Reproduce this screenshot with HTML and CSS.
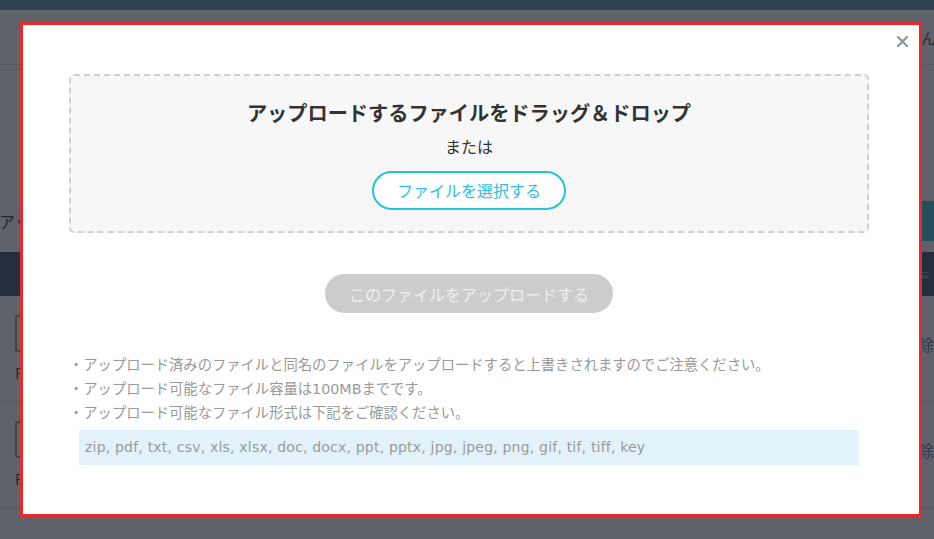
FILE: index.html
```html
<!DOCTYPE html>
<html lang="ja">
<head>
<meta charset="utf-8">
<title>ファイルアップロード</title>
<link rel="stylesheet" href="styles.css">
</head>
<body>
<div class="page">
  <header class="topbar"></header>
  <div class="subbar"><span class="user">テストユーザーさん</span></div>
  <div class="spacer"></div>
  <div class="toolbar">
    <h2 class="page-title">アップロードファイル一覧</h2>
    <span class="add-btn">追加</span>
  </div>
  <div class="table-head"><span class="menu-mark">≡</span></div>
  <div class="row">
    <div class="file">
      <div class="thumb"></div>
      <div class="fname">File_sample.pdf</div>
    </div>
    <a class="del">削除</a>
  </div>
  <div class="row">
    <div class="file">
      <div class="thumb"></div>
      <div class="fname">File_document.pdf</div>
    </div>
    <a class="del">削除</a>
  </div>
</div>

<div class="overlay"></div>

<div class="modal">
  <button class="close" aria-label="閉じる">
    <svg width="11" height="11" viewBox="0 0 11 11"><path d="M1 1 L10 10 M10 1 L1 10" stroke="#8e98a4" stroke-width="2.4" stroke-linecap="round" fill="none"/></svg>
  </button>
  <div class="dropzone">
    <h3 class="drop-title">アップロードするファイルをドラッグ＆ドロップ</h3>
    <p class="or">または</p>
    <button class="select-btn">ファイルを選択する</button>
  </div>
  <div class="upload-wrap">
    <button class="upload-btn" disabled>このファイルをアップロードする</button>
  </div>
  <ul class="notes">
    <li>・アップロード済みのファイルと同名のファイルをアップロードすると上書きされますのでご注意ください。</li>
    <li>・アップロード可能なファイル容量は100MBまでです。</li>
    <li>・アップロード可能なファイル形式は下記をご確認ください。</li>
  </ul>
  <div class="exts">zip, pdf, txt, csv, xls, xlsx, doc, docx, ppt, pptx, jpg, jpeg, png, gif, tif, tiff, key</div>
</div>
</body>
</html>
```

FILE: styles.css
```css
html, body {
  margin: 0;
  padding: 0;
  height: 100%;
  overflow: hidden;
  background: #ffffff;
  font-family: "Noto Sans CJK JP", "Noto Sans", sans-serif;
}

.page {
  display: flex;
  flex-direction: column;
  width: 100%;
}

.topbar {
  height: 10px;
  background: #76a3c0;
}

.subbar {
  height: 54px;
  border-bottom: 1px solid #e4e4e4;
  display: flex;
  justify-content: flex-end;
  align-items: center;
}

.user {
  font-size: 15px;
  color: #555;
  margin-right: -2px;
}

.spacer {
  height: 136px;
}

.toolbar {
  height: 40px;
  display: flex;
  justify-content: space-between;
  align-items: center;
}

.page-title {
  margin: 0;
  font-size: 16px;
  font-weight: normal;
  color: #555;
  margin-left: -1px;
}

.add-btn {
  height: 40px;
  width: 120px;
  background: #53c6d1;
  color: #fff;
  font-size: 14px;
  display: flex;
  align-items: center;
  justify-content: center;
}

.table-head {
  margin-top: 11px;
  height: 44px;
  background: #536d76;
  display: flex;
  justify-content: flex-end;
  align-items: center;
}

.menu-mark {
  color: #ccc;
  font-size: 12px;
  margin-right: 4px;
}

.row {
  height: 105px;
  border-bottom: 1px solid #e0e0e0;
  display: flex;
  justify-content: space-between;
  align-items: flex-start;
  padding-left: 15px;
}

.file {
  padding-top: 19px;
}

.thumb {
  width: 40px;
  height: 37px;
  box-sizing: border-box;
  border: 2px solid #a8a8a8;
  border-radius: 3px;
}

.fname {
  font-size: 14px;
  color: #555;
  margin-top: 11px;
}

.del {
  font-size: 16px;
  color: #6f8fb0;
  margin-top: 36px;
  margin-right: 0;
}

.overlay {
  position: fixed;
  inset: 0;
  background: rgba(9, 14, 26, 0.65);
}

.modal {
  position: fixed;
  left: 20px;
  top: 22px;
  width: 902px;
  height: 495px;
  box-sizing: border-box;
  border: 3px solid #e62a2c;
  background: #fff;
  padding: 49px 50px 0 46px;
}

.close {
  position: absolute;
  top: 11px;
  right: 11px;
  width: 11px;
  height: 11px;
  padding: 0;
  border: 0;
  background: none;
  display: flex;
}

.dropzone {
  height: 159px;
  box-sizing: border-box;
  border: 2px dashed #cfcfcf;
  border-radius: 5px;
  background: #f7f7f7;
  padding-top: 22px;
  display: flex;
  flex-direction: column;
  align-items: center;
}

.drop-title {
  margin: 0;
  font-size: 20.2px;
  line-height: 30px;
  font-weight: bold;
  color: #333;
}

.or {
  margin: 6px 0 0;
  font-size: 16px;
  line-height: 24px;
  color: #333;
}

.select-btn {
  margin-top: 13px;
  height: 39px;
  box-sizing: border-box;
  padding: 0 23px;
  border: 2px solid #22c4dc;
  border-radius: 20px;
  background: #fff;
  color: #2ec0dc;
  font-family: inherit;
  font-size: 16px;
  line-height: 35px;
}

.upload-wrap {
  display: flex;
  justify-content: center;
  margin-top: 41px;
}

.upload-btn {
  height: 39px;
  padding: 0 24px;
  border: 0;
  border-radius: 20px;
  background: #cccccc;
  color: #f0f0f0;
  font-family: inherit;
  font-size: 16px;
}

.notes {
  list-style: none;
  margin: 40px 0 0;
  padding: 0;
  font-family: "DejaVu Sans", "Noto Sans CJK JP", sans-serif;
  font-size: 14.3px;
  line-height: 24px;
  color: #999;
}

.notes li {
  height: 24px;
}

.exts {
  margin: 5px 10px 0;
  height: 35px;
  line-height: 35px;
  padding: 0 6px;
  background: #e3f2f8;
  font-family: "DejaVu Sans", "Noto Sans CJK JP", sans-serif;
  font-size: 14px;
  letter-spacing: 0.2px;
  color: #9a9a9a;
}
```
